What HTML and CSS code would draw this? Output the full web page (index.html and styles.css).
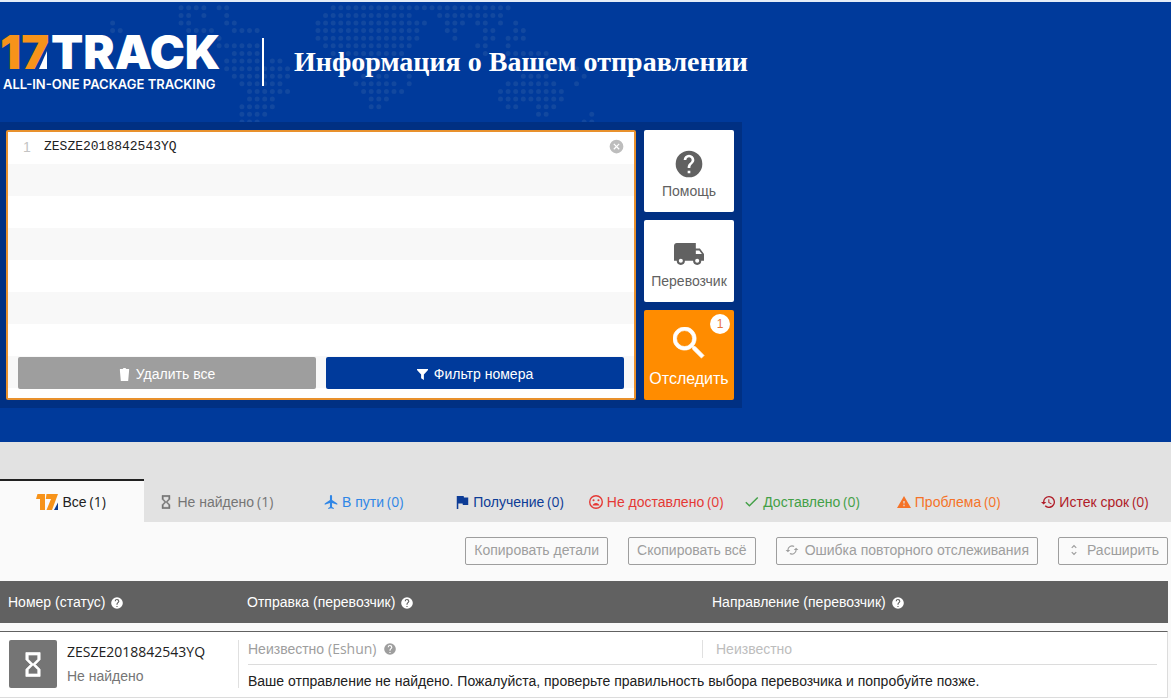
FILE: index.html
```html
<!DOCTYPE html>
<html lang="ru">
<head>
<meta charset="utf-8">
<title>17TRACK</title>
<meta name="viewport" content="width=device-width, initial-scale=1">
<link rel="stylesheet" href="styles.css">
</head>
<body>
<svg class="defs" aria-hidden="true">
  <symbol id="help" viewBox="0 0 24 24"><path d="M12 2a10 10 0 1 0 0 20 10 10 0 0 0 0-20zm1 17h-2v-2h2v2zm2.070-7.750-.9.92C13.450 12.900 13 13.500 13 15h-2v-.5c0-1.100.45-2.100 1.170-2.830l1.240-1.260A2 2 0 1 0 10 9H8a4 4 0 1 1 8 0c0 .88-.36 1.680-.93 2.250z"/></symbol>
  <symbol id="hourglass" viewBox="5.500 1.500 13 21"><path stroke="currentColor" stroke-width=".6" d="M6 2v6l4 4-4 4v6h12v-6l-4-4 4-4V2H6zm10 14.500V20H8v-3.500l4-4 4 4zm-4-5-4-4V4h8v3.500l-4 4z"/></symbol>
  <symbol id="seventeen" viewBox="0 0 22 16"><path fill="#f7931a" d="M1.500 0H9v16H4V5H0zM10.500 0H22l-6 16h-5.500l4.500-11H9.800z"/><path fill="#0b3a8e" d="M22 8.500V16h-4z"/></symbol>
</svg>

<header class="hero">
  <svg class="map" viewBox="-10 -0.500 66 17" aria-hidden="true">
    <path d="M0 0h3.100M5 0h1.100M20 0h23.100M0 1h1.100M3 1h.1M6 1h.1M19 1h11.100M34 1h8.100M-9 2h.1M0 2h1.100M6 2h1.100M18 2h14.100M35 2h2.100M39 2h1.100M42 2h.1M44 2h.1M-9 3h1.100M1 3h3.100M7 3h3.100M18 3h13.100M35 3h1.100M40 3h1.100M44 3h1.100M5 4h.1M18 4h13.100M36 4h.1M40 4h1.100M43 4h2.100M5 5h5.100M19 5h11.100M39 5h1.100M43 5h.1M7 6h3.100M20 6h9.100M40 6h.1M43 6h5.100M6 7h4.100M12 7h1.100M20 7h8.100M6 8h8.100M22 8h5.100M52 8h.1M7 9h7.100M24 9h3.100M30 9h.1M45 9h3.100M53 9h.1M8 10h5.100M23 10h5.100M30 10h.1M43 10h6.100M52 10h.1M9 11h5.100M24 11h5.100M42 11h8.100M9 12h3.100M25 12h2.100M42 12h8.100M8 13h4.100M25 13h1.100M43 13h1.100M47 13h2.100M8 14h3.100M47 14h1.100M54 14h.1M8 15h2.100M53 15h1.100"/>
  </svg>
  <div class="brand">
    <a class="logo" href="#" aria-label="17TRACK">
      <svg viewBox="0 0 220 60" role="img">
        <text class="logo-num" x="0" y="37">17</text>
        <path fill="#fff" d="M47 19v18h-8z"/>
        <text class="logo-name" x="51" y="37">TRACK</text>
        <text class="logo-tag" x="3" y="57">ALL-IN-ONE PACKAGE TRACKING</text>
      </svg>
    </a>
    <h1>Информация о Вашем отправлении</h1>
  </div>

  <form class="tracker">
    <div class="editor">
      <div class="line">
        <label for="num">1</label>
        <input id="num" type="text" value="ZESZE2018842543YQ">
        <button type="button" class="clear" aria-label="Очистить"><svg viewBox="0 0 24 24"><path d="M12 1a11 11 0 1 0 0 22 11 11 0 0 0 0-22zm5 14.600L15.600 17 12 13.400 8.400 17 7 15.600l3.600-3.600L7 8.400 8.400 7l3.600 3.600L15.600 7 17 8.400 13.400 12z"/></svg></button>
      </div>
      <div class="editor-actions">
        <button type="button" class="gray"><svg viewBox="0 0 12 14"><path d="M1 3h10l-1 11H2zM1 1h3l1-1h2l1 1h3v2H1z"/></svg>Удалить все</button>
        <button type="button" class="blue"><svg viewBox="0 0 12 14"><path d="M0 1h12v1L7.500 7v6L4.500 11V7L0 2z"/></svg>Фильтр номера</button>
      </div>
    </div>
    <div class="side">
      <button type="button"><svg class="i-help"><use href="#help"/></svg>Помощь</button>
      <button type="button"><svg class="i-truck" viewBox="1 4 22 16"><path d="M20 8h-3V4H3c-1.100 0-2 .9-2 2v11h2a3 3 0 0 0 6 0h6a3 3 0 0 0 6 0h2v-5l-3-4zM6 18.500a1.500 1.500 0 1 1 0-3 1.500 1.500 0 0 1 0 3zm13.500-9 1.960 2.500H17V9.500h2.500zm-1.500 9a1.500 1.500 0 1 1 0-3 1.500 1.500 0 0 1 0 3z"/></svg>Перевозчик</button>
      <button type="submit" class="track"><svg class="i-search" viewBox="3 3 18 18"><path stroke="currentColor" stroke-width=".4" d="M15.500 14h-.79l-.28-.27a6.500 6.500 0 1 0-.7.7l.27.28v.79l5 4.990L20.490 19l-4.990-5zm-6 0a4.500 4.500 0 1 1 0-9 4.500 4.500 0 0 1 0 9z"/></svg>Отследить<span class="badge">1</span></button>
    </div>
  </form>
</header>

<main>
  <nav class="tabs">
    <a href="#" class="active"><svg class="i-17"><use href="#seventeen"/></svg>Все <span class="lat">(1)</span></a>
    <a href="#" class="c-gray"><svg class="i-hour"><use href="#hourglass"/></svg>Не найдено <span class="lat">(1)</span></a>
    <a href="#" class="c-sky"><svg viewBox="2 2 20 20"><path d="M21 16v-2l-7.500-5V3.500a1.500 1.500 0 0 0-3 0V9L3 14v2l7.500-2.500V19L8 20.500V22l4-1 4 1v-1.500L13.500 19v-5.500z"/></svg>В пути <span class="lat">(0)</span></a>
    <a href="#" class="c-navy"><svg class="i-flag" viewBox="4 3 17 18"><path d="M14.400 6 14 4H5v17h2v-7h5.600l.4 2h7V6z"/></svg>Получение <span class="lat">(0)</span></a>
    <a href="#" class="c-red"><svg viewBox="2 2 20 20"><path d="M12 2a10 10 0 1 0 0 20 10 10 0 0 0 0-20zm0 18a8 8 0 1 1 0-16 8 8 0 0 1 0 16zm3.500-9a1.500 1.500 0 1 0 0-3 1.500 1.500 0 0 0 0 3zm-7 0a1.500 1.500 0 1 0 0-3 1.500 1.500 0 0 0 0 3zm3.500 2.500c-2.330 0-4.320 1.450-5.120 3.500h10.240c-.8-2.050-2.790-3.500-5.120-3.500z"/></svg>Не доставлено <span class="lat">(0)</span></a>
    <a href="#" class="c-green"><svg viewBox="3 3 19 19"><path d="M9 16.200 4.800 12l-1.400 1.400L9 19 21 7l-1.400-1.400z"/></svg>Доставлено <span class="lat">(0)</span></a>
    <a href="#" class="c-orange"><svg viewBox="1 1 22 21"><path d="M1 21h22L12 2 1 21zm12-3h-2v-2h2v2zm0-4h-2v-4h2v4z"/></svg>Проблема <span class="lat">(0)</span></a>
    <a href="#" class="c-wine"><svg viewBox="1 2 21 20"><path d="M13 3a9 9 0 0 0-9 9H1l3.900 3.900L9 12H6a7 7 0 1 1 2.060 4.940l-1.420 1.420A9 9 0 1 0 13 3zm-1 5v5l4.280 2.540.72-1.210-3.500-2.080V8H12z"/></svg>Истек срок <span class="lat">(0)</span></a>
  </nav>

  <div class="tools">
    <button type="button">Копировать детали</button>
    <button type="button">Скопировать всё</button>
    <button type="button"><svg viewBox="0 0 24 24"><path d="M19 8l-4 4h3a6 6 0 0 1-8.800 5.300l-1.460 1.460A8 8 0 0 0 20 12h3l-4-4zM6 12a6 6 0 0 1 8.800-5.300l1.460-1.460A8 8 0 0 0 4 12H1l4 4 4-4H6z"/></svg>Ошибка повторного отслеживания</button>
    <button type="button"><svg viewBox="0 0 24 24"><path d="M12 5.830 15.170 9l1.410-1.410L12 3 7.410 7.590 8.830 9 12 5.830zm0 12.340L8.830 15l-1.410 1.410L12 21l4.590-4.590L15.170 15 12 18.170z"/></svg>Расширить</button>
  </div>

  <table class="results">
    <thead>
      <tr>
        <th class="col-num">Номер (статус) <svg><use href="#help"/></svg></th>
        <th class="col-from">Отправка (перевозчик) <svg><use href="#help"/></svg></th>
        <th class="col-to">Направление (перевозчик) <svg><use href="#help"/></svg></th>
      </tr>
    </thead>
    <tbody>
      <tr>
        <td rowspan="2" class="parcel">
          <div class="parcel-box">
            <span class="status"><svg><use href="#hourglass"/></svg></span>
            <div><div class="code">ZESZE2018842543YQ</div><div class="state">Не найдено</div></div>
          </div>
        </td>
        <td class="from"><div class="cell">Неизвестно <span class="lat">(Eshun)</span> <svg><use href="#help"/></svg></div></td>
        <td class="to"><div class="cell"><span>Неизвестно</span></div></td>
      </tr>
      <tr>
        <td colspan="2" class="message">Ваше отправление не найдено. Пожалуйста, проверьте правильность выбора перевозчика и попробуйте позже.</td>
      </tr>
    </tbody>
  </table>
</main>
</body>
</html>
```

FILE: styles.css
```css
* { box-sizing: border-box; }

body {
  margin: 0;
  background: #fafafa;
  color: #212121;
  font: 14px/20px "Liberation Sans", Arial, sans-serif;
}

button, input { font: inherit; }
button { cursor: pointer; }
a { color: inherit; text-decoration: none; }
svg { fill: currentColor; flex: none; }
.defs { display: none; }
.lat { font-family: "Open Sans", "Noto Sans", sans-serif; }

/* Blue header */
.hero {
  position: relative;
  padding-bottom: 34px;
  border-top: 2px solid #e4ecf8;
  background: #003a9b;
}

.map {
  position: absolute;
  top: 2px;
  left: 105px;
  width: 502px;
  fill: none;
  stroke: #12489f;
  stroke-width: 0.66;
  stroke-linecap: round;
  stroke-dasharray: 0 1;
}

.brand {
  position: relative;
  display: flex;
  align-items: center;
  height: 120px;
}

.logo {
  display: block;
  width: 262px;
  height: 60px;
}
.logo svg { display: block; width: 220px; height: 60px; overflow: visible; }
.logo-num, .logo-name { font: 900 47px Inter, sans-serif; }
.logo-num { fill: #f7931a; }
.logo-name { fill: #fff; }
.logo-tag { font: 600 13px Inter, sans-serif; fill: #fff; }

h1 {
  margin: 0;
  padding-left: 30px;
  border-left: 2px solid #fff;
  color: #fff;
  font: bold 28px/48px "Liberation Serif", "Times New Roman", serif;
}

.tracker {
  position: relative;
  display: flex;
  gap: 8px;
  width: 742px;
  max-width: 100%;
  padding: 8px 8px 8px 6px;
  background: #003083;
}

.editor {
  flex: 1;
  display: flex;
  flex-direction: column;
  justify-content: space-between;
  padding-bottom: 9px;
  border: 2px solid #e8912d;
  border-radius: 2px;
  background: #fff linear-gradient(#fff 50%, #f8f8f8 50%) 0 0 / 100% 64px;
}

.line {
  display: flex;
  align-items: center;
  height: 32px;
  padding: 0 10px 3px 15px;
}
.line label { width: 21px; color: #c4c4c4; }
.line input {
  flex: 1;
  min-width: 0;
  padding: 0;
  border: 0;
  background: none;
  color: #212121;
  font: 13px "Liberation Mono", "Courier New", monospace;
}
.clear {
  display: flex;
  padding: 0;
  border: 0;
  background: none;
  color: #bdbdbd;
}
.clear svg { width: 15px; height: 15px; }

.editor-actions { display: flex; gap: 10px; padding: 0 10px; }
.editor-actions button {
  flex: 1;
  display: flex;
  align-items: center;
  justify-content: center;
  gap: 6px;
  height: 32px;
  padding: 2px 0 0;
  border: 0;
  border-radius: 2px;
  color: #fff;
}
.editor-actions svg { width: 11px; height: 13px; }
.editor-actions .gray { background: #9e9e9e; }
.editor-actions .blue { background: #003a9b; }

.side { display: flex; flex-direction: column; gap: 8px; width: 90px; }
.side button {
  position: relative;
  display: flex;
  flex-direction: column;
  align-items: center;
  justify-content: flex-end;
  height: 82px;
  padding: 0 0 11px;
  border: 0;
  border-radius: 2px;
  background: #fff;
  color: #616161;
}
.i-help { width: 32px; height: 32px; margin-bottom: 1px; }
.i-truck { width: 30px; height: 22px; margin-bottom: 6px; }
.i-search { width: 32px; height: 32px; margin-bottom: 10px; }
.side .track { height: 90px; background: #ff8c00; color: #fff; font-size: 16px; }
.badge {
  position: absolute;
  top: 4px;
  right: 4px;
  width: 20px;
  border-radius: 50%;
  background: #fff;
  color: #e8743b;
  font-size: 12px;
  line-height: 20px;
}

/* Status tabs */
.tabs {
  display: flex;
  margin-left: -2px;
  padding: 37px 3px 0 0;
  background: #e2e2e2;
}
.tabs a {
  flex: 1;
  display: flex;
  align-items: center;
  justify-content: center;
  gap: 4px;
  height: 43px;
  border-top: 2px solid transparent;
  white-space: nowrap;
}
.tabs .lat { margin-left: -1px; }
.tabs svg { width: 14px; height: 14px; }
.tabs .i-17 { width: 22px; height: 16px; }
.tabs .i-hour { width: 10px; margin-right: 2px; }
.tabs .i-flag { width: 13px; }
.tabs .active { border-top-color: #212121; background: #fafafa; }
.c-gray { color: #757575; }
.c-sky { color: #2f86e6; }
.c-navy { color: #0d3c96; }
.c-red { color: #e53935; }
.c-green { color: #43a047; }
.c-orange { color: #f57328; }
.c-wine { color: #b01c28; }

/* Bulk actions */
.tools {
  display: flex;
  justify-content: flex-end;
  gap: 20px;
  padding: 15px 3px 16px;
}
.tools button {
  display: flex;
  align-items: center;
  gap: 6px;
  height: 28px;
  padding: 0 8px 2px;
  border: 1px solid #9e9e9e;
  border-radius: 2px;
  background: none;
  color: #9e9e9e;
}
.tools svg { width: 14px; height: 14px; }

/* Results */
.results {
  width: calc(100% - 3px);
  border-collapse: separate;
  border-spacing: 0;
  table-layout: fixed;
}
.col-num { width: 239px; }
.col-from { width: 463px; }
.results svg { width: 14px; height: 14px; margin-left: 1px; vertical-align: -3px; }

th {
  height: 50px;
  padding: 0 0 0 8px;
  border-bottom: 8px solid #fafafa;
  background: #616161;
  background-clip: padding-box;
  color: #fff;
  font-weight: normal;
  text-align: left;
}
.results .col-to { padding-left: 10px; }

td { padding: 0; background: #fff; }
.parcel, .from, .to { border-top: 1px solid #616161; }
.parcel, .message { border-bottom: 1px solid #dcdcdc; }
.to, .message { border-right: 1px solid #dcdcdc; }

.parcel { padding-top: 8px; vertical-align: top; }
.parcel-box {
  display: flex;
  gap: 10px;
  padding-left: 9px;
  border-right: 1px solid #e0e0e0;
  line-height: 24px;
}
.status {
  display: flex;
  align-items: center;
  justify-content: center;
  width: 48px;
  height: 48px;
  border-radius: 2px;
  background: #757575;
  color: #fff;
}
.results .status svg { width: 16px; height: 25px; margin: 0; }
.code { font-family: "Open Sans", "Noto Sans", sans-serif; }
.state { color: #757575; }

.cell {
  height: 33px;
  padding-top: 8px;
  border-bottom: 1px solid #dcdcdc;
  line-height: 18px;
}
.from { padding-left: 9px; color: #9e9e9e; }
.from svg { margin-left: 3px; vertical-align: -2px; }
.to { padding-right: 10px; color: #bdbdbd; }
.to span { display: block; padding-left: 13px; border-left: 1px solid #e0e0e0; }
.message { height: 33px; padding-left: 9px; }
```
